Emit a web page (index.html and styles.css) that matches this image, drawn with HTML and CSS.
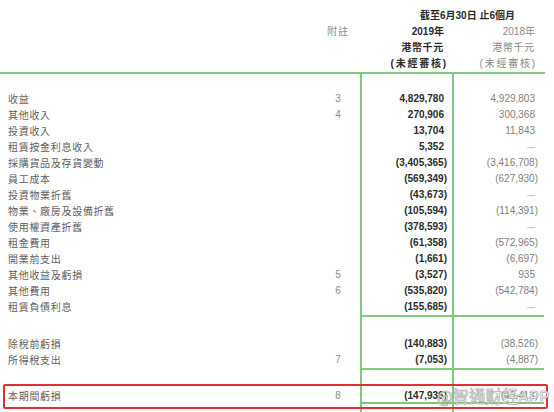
FILE: index.html
```html
<!DOCTYPE html>
<html lang="zh-Hant">
<head>
<meta charset="utf-8">
<title>簡明綜合損益表</title>
<link rel="stylesheet" href="styles.css">
</head>
<body>
<div class="sheet">
  <div class="head">
    <div class="period">截至6月30日 止6個月</div>
    <div class="note-h">附註</div><div class="h-cur">2019年</div><div class="h-prev">2018年</div>
    <div></div><div class="h-cur sp">港幣千元</div><div class="h-prev sp">港幣千元</div>
    <div></div><div class="h-cur par">(未經審核)</div><div class="h-prev par">(未經審核)</div>
  </div>
  <div class="toprule"></div>
  <div class="table">
    <div class="lb">收益</div><div class="nt">3</div><div class="cur pos">4,829,780</div><div class="prev pos">4,929,803</div>
    <div class="lb">其他收入</div><div class="nt">4</div><div class="cur pos">270,906</div><div class="prev pos">300,368</div>
    <div class="lb">投資收入</div><div class="nt"></div><div class="cur pos">13,704</div><div class="prev pos">11,843</div>
    <div class="lb">租賃按金利息收入</div><div class="nt"></div><div class="cur pos">5,352</div><div class="prev dash">—</div>
    <div class="lb">採購貨品及存貨變動</div><div class="nt"></div><div class="cur">(3,405,365)</div><div class="prev">(3,416,708)</div>
    <div class="lb">員工成本</div><div class="nt"></div><div class="cur">(569,349)</div><div class="prev">(627,930)</div>
    <div class="lb">投資物業折舊</div><div class="nt"></div><div class="cur">(43,673)</div><div class="prev dash">—</div>
    <div class="lb">物業、廠房及設備折舊</div><div class="nt"></div><div class="cur">(105,594)</div><div class="prev">(114,391)</div>
    <div class="lb">使用權資產折舊</div><div class="nt"></div><div class="cur">(378,593)</div><div class="prev dash">—</div>
    <div class="lb">租金費用</div><div class="nt"></div><div class="cur">(61,358)</div><div class="prev">(572,965)</div>
    <div class="lb">開業前支出</div><div class="nt"></div><div class="cur">(1,661)</div><div class="prev">(6,697)</div>
    <div class="lb">其他收益及虧損</div><div class="nt">5</div><div class="cur">(3,527)</div><div class="prev pos">935</div>
    <div class="lb">其他費用</div><div class="nt">6</div><div class="cur">(535,820)</div><div class="prev">(542,784)</div>
    <div class="lb">租賃負債利息</div><div class="nt"></div><div class="cur">(155,685)</div><div class="prev dash">—</div>
    <div class="rule"></div>
    <div class="spacer"></div>
    <div class="lb">除稅前虧損</div><div class="nt"></div><div class="cur">(140,883)</div><div class="prev">(38,526)</div>
    <div class="lb">所得稅支出</div><div class="nt">7</div><div class="cur">(7,053)</div><div class="prev">(4,887)</div>
    <div class="rule"></div>
    <div class="spacer"></div>
    <div class="lb last">本期間虧損</div><div class="nt last">8</div><div class="cur last">(147,936)</div><div class="prev last">(43,413)</div>
    <div class="rule"></div>
  </div>
  <div class="colframe"></div>
  <div class="redbox"></div>
  <div class="wm">@智通财经APP</div>
</div>
</body>
</html>
```

FILE: styles.css
```css
html, body {
  margin: 0;
  padding: 0;
  background: #ffffff;
}

body {
  width: 554px;
  height: 412px;
  overflow: hidden;
  font-family: "Liberation Sans", "Noto Sans CJK TC", sans-serif;
  font-size: 10px;
  color: #555555;
}

.sheet {
  position: relative;
  height: 412px;
  padding: 8px 0 0 8px;
  box-sizing: border-box;
}

.head,
.table {
  display: grid;
  grid-template-columns: 312px 36px 97px 91px;
}

.head {
  grid-auto-rows: 16px;
  line-height: 16px;
}

.period {
  grid-column: 3 / 5;
  padding-left: 64px;
  font-weight: bold;
  color: #2b2b2b;
  height: 15px;
  line-height: 15px;
}

.note-h {
  grid-column: 2;
  text-align: center;
  color: #8a8a8a;
  letter-spacing: 1px;
}

.h-cur,
.h-prev {
  text-align: right;
  white-space: nowrap;
}

.h-cur {
  grid-column: 3;
  font-weight: bold;
  color: #2b2b2b;
  padding-right: 9px;
}

.h-prev {
  grid-column: 4;
  color: #8a8a8a;
  padding-right: 9px;
}

.head .sp {
  letter-spacing: 0.7px;
}

.head .par {
  letter-spacing: 1.8px;
  padding-right: 5px;
}

.head .h-prev.par {
  padding-right: 7px;
}

.toprule {
  width: 545px;
  height: 2px;
  margin-left: -8px;
  background: #7cca7c;
}

.table {
  margin-top: 17px;
  line-height: 16px;
}

.lb {
  grid-column: 1;
  font-family: "Noto Sans CJK TC", sans-serif;
  letter-spacing: 0.7px;
  color: #606060;
  white-space: nowrap;
}

.nt {
  grid-column: 2;
  text-align: center;
  color: #8a8a8a;
}

.cur,
.prev {
  text-align: right;
  padding-right: 6px;
  white-space: nowrap;
}

.cur {
  grid-column: 3;
  font-weight: bold;
  color: #2b2b2b;
}

.prev {
  grid-column: 4;
  color: #7f7f7f;
}

.pos {
  padding-right: 9px;
}

.dash {
  padding-right: 9px;
  font-size: 8px;
  color: #9a9a9a;
}

.rule {
  grid-column: 3 / 5;
  height: 2px;
  margin-left: 5px;
  background: #7cca7c;
}

.spacer {
  grid-column: 1 / -1;
  height: 19px;
}

.last {
  line-height: 13px;
}

.colframe {
  position: absolute;
  left: 360px;
  top: 72px;
  bottom: 0;
  width: 94px;
  box-sizing: border-box;
  border-left: 2px solid #7cca7c;
  border-right: 2px solid #7cca7c;
}

.redbox {
  position: absolute;
  left: 3px;
  top: 384px;
  width: 545px;
  height: 25px;
  box-sizing: border-box;
  border: 2px solid #e0302f;
  border-radius: 2px;
}

.wm {
  position: absolute;
  left: 437px;
  top: 388px;
  font-family: "Noto Sans CJK SC", sans-serif;
  font-size: 16.5px;
  line-height: 17px;
  color: #ffffff;
  -webkit-text-stroke: 0.5px #a0a0a0;
  text-shadow: 0 0 1px rgba(120, 120, 120, 0.6);
  white-space: nowrap;
}
```
